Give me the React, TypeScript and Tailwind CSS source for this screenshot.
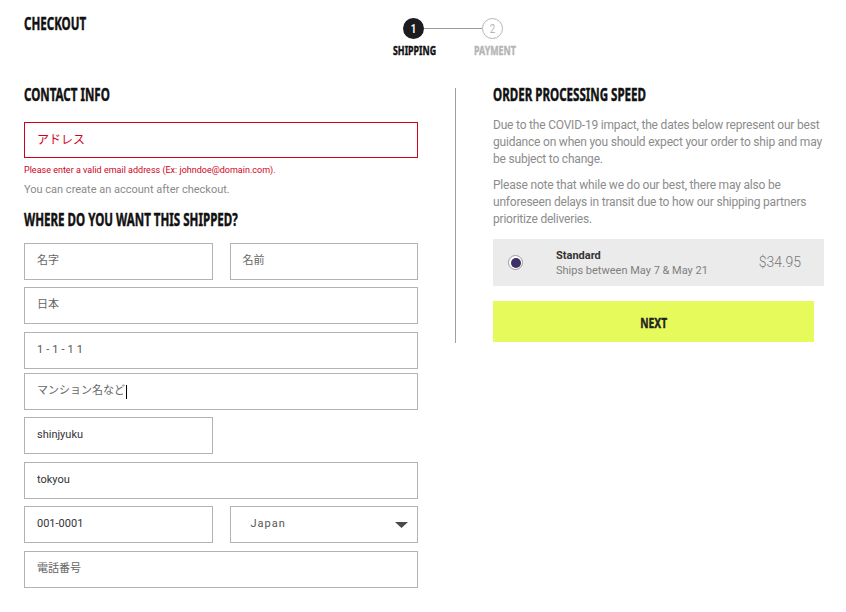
import React from "react";

// No condensed face is installed, so the bold display type is narrowed with scale-x
// and thickened slightly with a stroke to get closer to a heavy condensed grotesk.
const HEAD =
  "font-['Noto_Sans','DejaVu_Sans',sans-serif] font-bold uppercase text-[#111] [-webkit-text-stroke:0.45px_currentColor]";
const BODY = "font-['Roboto','Noto_Sans_CJK_JP',sans-serif]";

function Narrow({ children, className = "" }: { children: React.ReactNode; className?: string }) {
  return <span className={`inline-block origin-left scale-x-[0.68] whitespace-nowrap ${className}`}>{children}</span>;
}

function Field({
  value,
  placeholder,
  className = "",
  extra = "",
}: {
  value?: string;
  placeholder?: string;
  className?: string;
  extra?: string;
}) {
  return (
    <div className={`flex h-[37px] items-center border border-[#b3b3b3] px-3 ${className}`}>
      <span className={`text-[11px] ${value ? "text-[#333]" : "text-[#666]"} ${extra}`}>{value ?? placeholder}</span>
    </div>
  );
}

export default function App() {
  return (
    <div className={`h-[612px] w-[846px] overflow-hidden bg-white ${BODY}`}>
      {/* header + stepper */}
      <div className="flex h-[85px]">
        <h1 className={`${HEAD} ml-6 mt-[14px] w-[76px] text-[17px] leading-5`}>
          <Narrow>Checkout</Narrow>
        </h1>
        <div className="ml-[293px] mt-[18px] flex flex-col">
          <div className="ml-[10px] flex items-center">
            <div className="flex h-[21px] w-[21px] items-center justify-center rounded-full bg-[#1c1b1f] text-[12px] font-bold text-white">
              <span className="inline-block scale-x-[0.8]">1</span>
            </div>
            <div className="h-px w-[58px] bg-[#9c9c9c]" />
            <div className="flex h-[21px] w-[21px] items-center justify-center rounded-full border border-[#b5b5b5] text-[12px] text-[#b5b5b5]">
              <span className="inline-block scale-x-[0.8]">2</span>
            </div>
          </div>
          <div className={`${HEAD} mt-[3px] flex text-[13px] leading-4`}>
            <span className="w-[81px]">
              <Narrow>Shipping</Narrow>
            </span>
            <Narrow className="text-[#b5b5b5]">Payment</Narrow>
          </div>
        </div>
      </div>

      <div className="flex">
        {/* left column */}
        <div className="ml-6 w-[394px]">
          <h2 className={`${HEAD} text-[17px] leading-5`}>
            <Narrow>Contact Info</Narrow>
          </h2>
          <div className="mt-[17px] flex h-[36px] items-center border border-[#d0021b] px-3">
            <span className="text-[12px] text-[#d0021b]">アドレス</span>
          </div>
          <p className="mt-[6px] text-[9px] leading-3 text-[#d0021b]">
            Please enter a valid email address (Ex: johndoe@domain.com).
          </p>
          <p className="mt-[7px] text-[11px] leading-[14px] text-[#8a8a8a]">You can create an account after checkout.</p>
          <h2 className={`${HEAD} mt-[13px] text-[17px] leading-5`}>
            <Narrow>Where do you want this shipped?</Narrow>
          </h2>

          <div className="mt-[13px] flex gap-[17px]">
            <Field placeholder="名字" className="w-[189px]" />
            <Field placeholder="名前" className="w-[189px]" />
          </div>
          <Field placeholder="日本" className="mt-[7px]" />
          <Field value="1-1-11" className="mt-[8px]" extra="tracking-[3px] text-[#555]" />
          <div className="mt-[4px] flex h-[37px] items-center border border-[#b3b3b3] px-3">
            <span className="text-[11px] text-[#666]">マンション名など</span>
            <span className="ml-px h-[14px] w-px bg-black" />
          </div>
          <Field value="shinjyuku" className="mt-[7px] w-[189px]" />
          <Field value="tokyou" className="mt-[8px]" />
          <div className="mt-[7px] flex gap-[17px]">
            <Field value="001-0001" className="w-[189px]" />
            <div className="flex h-[37px] w-[189px] items-center justify-between border border-[#b3b3b3] pl-5 pr-[9px]">
              <span className="text-[11px] tracking-[1px] text-[#555]">Japan</span>
              <svg width="13" height="6" viewBox="0 0 13 6">
                <path d="M0 0h13L6.5 6z" fill="#4a4a4a" />
              </svg>
            </div>
          </div>
          <Field placeholder="電話番号" className="mt-[8px]" />
        </div>

        {/* divider */}
        <div className="ml-[37px] mt-[3px] h-[255px] w-px bg-[#a0a0a0]" />

        {/* right column */}
        <div className="ml-[37px] w-[331px]">
          <h2 className={`${HEAD} text-[17px] leading-5`}>
            <Narrow>Order Processing Speed</Narrow>
          </h2>
          <p className="mt-[12px] text-[12px] leading-[17px] tracking-[-0.2px] text-[#8c8c8c]">
            Due to the COVID-19 impact, the dates below represent our best guidance on when you should expect your
            order to ship and may be subject to change.
          </p>
          <p className="mt-[9px] text-[12px] leading-[17px] tracking-[-0.2px] text-[#8c8c8c]">
            Please note that while we do our best, there may also be unforeseen delays in transit due to how our
            shipping partners prioritize deliveries.
          </p>
          <div className="mt-[11px] flex h-[47px] items-center bg-[#ebebeb] pl-[15px] pr-[23px]">
            <div className="flex h-[15px] w-[15px] items-center justify-center rounded-full border border-[#9a9a9a] bg-white">
              <div className="h-[10px] w-[10px] rounded-full bg-[#3d3068]" />
            </div>
            <div className="ml-[33px] flex-1">
              <div className="text-[11px] font-bold leading-[15px] text-[#333]">Standard</div>
              <div className="text-[11px] leading-[15px] text-[#808080]">Ships between May 7 &amp; May 21</div>
            </div>
            <span className="text-[14px] font-light text-[#777]">$34.95</span>
          </div>
          <button className={`${HEAD} mt-[15px] h-[41px] w-[321px] bg-[#e6fb5b] pt-[2px] text-[15px] !text-[#222]`}>
            <span className="inline-block scale-x-[0.68]">Next</span>
          </button>
        </div>
      </div>
    </div>
  );
}
